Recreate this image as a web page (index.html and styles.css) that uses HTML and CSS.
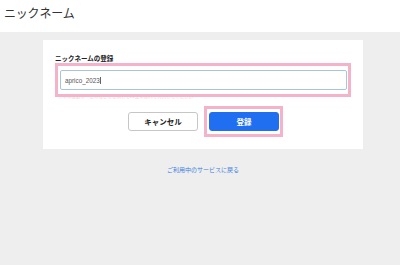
FILE: index.html
```html
<!DOCTYPE html>
<html lang="ja">
<head>
<meta charset="utf-8">
<title>ニックネーム</title>
<link rel="stylesheet" href="styles.css">
</head>
<body>
<header class="header">
  <h1 class="title">ニックネーム</h1>
</header>
<main class="main">
  <section class="card">
    <div class="label">ニックネームの登録</div>
    <div class="highlight field-wrap">
      <div class="input"><span class="value">aprico_2023</span><span class="caret"></span></div>
    </div>
    <div class="help">※半角英数字・記号などを使用して20文字以内で入力してください</div>
    <div class="actions">
      <button class="btn btn-cancel" type="button">キャンセル</button>
      <div class="highlight btn-wrap">
        <button class="btn btn-primary" type="button">登録</button>
      </div>
    </div>
  </section>
  <a class="back-link" href="#">ご利用中のサービスに戻る</a>
</main>
</body>
</html>
```
FILE: styles.css
```css
* { box-sizing: border-box; }
html, body { margin: 0; padding: 0; }
body {
  background: #eeeeee;
  font-family: "Liberation Sans", "Noto Sans CJK JP", sans-serif;
  color: #333;
  width: 400px;
  height: 265px;
  overflow: hidden;
}
.header {
  background: #fff;
  height: 32px;
  padding: 5px 0 0 4px;
}
.title {
  margin: 0;
  font-family: "Noto Sans CJK JP", sans-serif;
  font-weight: 400;
  font-size: 12px;
  line-height: 16px;
  color: #333;
  letter-spacing: -0.2px;
}
.main {
  padding-top: 8px;
  display: flex;
  flex-direction: column;
}
.card {
  background: #fff;
  width: 320px;
  margin-left: 43px;
  padding: 13px 12px 12px;
  display: flex;
  flex-direction: column;
}
.label {
  font-family: "Noto Sans CJK JP", sans-serif;
  font-weight: 700;
  font-size: 6.5px;
  line-height: 10px;
  color: #222;
}
.highlight {
  border: 3px solid #f5b3ca;
  position: relative;
}
.field-wrap {
  padding: 4px 1px 4px 2px;
}
.input {
  height: 20px;
  border: 1px solid #a9c3e3;
  border-radius: 2px;
  background: #fff;
  padding: 0 0 0 4px;
  display: flex;
  align-items: center;
  font-size: 6.3px;
  color: #555;
}
.caret {
  display: inline-block;
  width: 0.6px;
  height: 7px;
  background: #666;
  margin-left: 0.5px;
}
.help {
  margin-top: -4.5px;
  padding-left: 3px;
  font-family: "Noto Sans CJK JP", sans-serif;
  font-size: 4.5px;
  line-height: 6px;
  color: #dcdcdc;
  white-space: nowrap;
  overflow: hidden;
}
.actions {
  margin-top: 7.5px;
  display: flex;
  justify-content: center;
  align-items: center;
  gap: 6px;
  padding-left: 5px;
}
.btn {
  width: 70px;
  height: 19px;
  border-radius: 3px;
  font-family: "Noto Sans CJK JP", sans-serif;
  font-weight: 700;
  font-size: 7.5px;
  padding: 0;
  margin: 0;
  display: flex;
  align-items: center;
  justify-content: center;
}
.btn-cancel {
  background: #fff;
  border: 1px solid #c6c6c6;
  color: #222;
}
.btn-wrap {
  padding: 3px 1px 3px 2px;
}
.btn-primary {
  background: #1f6ff0;
  border: 1px solid #1f6ff0;
  color: #fff;
}
.back-link {
  align-self: center;
  margin: 16px 0 0 6px;
  font-family: "Noto Sans CJK JP", sans-serif;
  font-size: 6px;
  line-height: 9px;
  color: #3d7fd9;
  text-decoration: none;
}
```
